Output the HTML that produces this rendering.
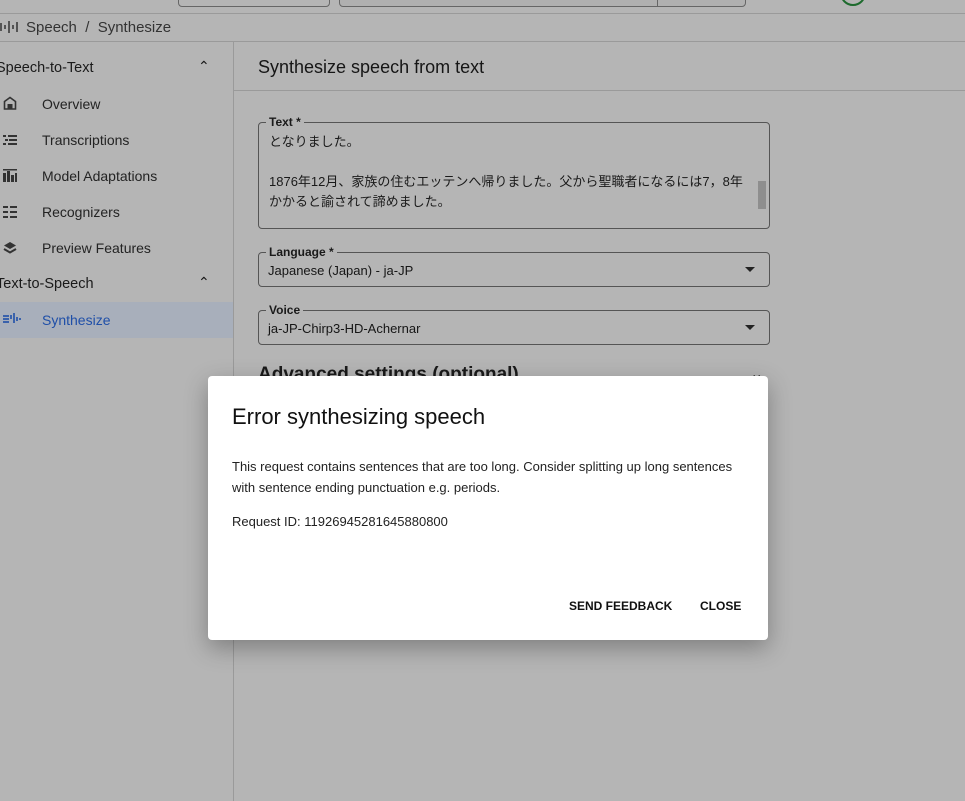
<!DOCTYPE html>
<html><head><meta charset="utf-8"><style>
*{margin:0;padding:0;box-sizing:border-box}
body{width:965px;height:801px;background:#b5b5b5;font-family:"Liberation Sans","Noto Sans CJK JP",sans-serif;color:#161616;position:relative;overflow:hidden}
.a{position:absolute}
.t{font-size:14px;white-space:nowrap}
.box{border:1px solid #555;border-radius:4px}
.lbl{position:absolute;top:-8px;left:7px;background:#b5b5b5;padding:0 3px;font-size:12px;font-weight:bold;color:#1a1a1a}
.nav{position:absolute;left:42px;font-size:14px;color:#232323}
.ic{position:absolute;left:3px;width:14px;height:14px}
</style></head><body>
<div class="a" style="left:178px;top:-10px;width:152px;height:17px;border:1px solid #666;border-radius:4px"></div>
<div class="a" style="left:339px;top:-10px;width:407px;height:17px;border:1px solid #666;border-radius:4px;background:#b0b0b0"></div>
<div class="a" style="left:657px;top:-10px;width:1px;height:16px;background:#666"></div>
<div class="a" style="left:840px;top:-20px;width:26px;height:26px;border:2px solid #1e6b2e;border-radius:50%"></div>
<div class="a" style="left:0;top:13px;width:965px;height:1px;background:#9a9a9a"></div>
<svg class="a" style="left:0;top:19px" width="20" height="16"><g stroke="#333" stroke-width="1.5"><line x1="1" y1="4" x2="1" y2="12"/><line x1="5" y1="6" x2="5" y2="10"/><line x1="9" y1="2" x2="9" y2="14"/><line x1="13" y1="6" x2="13" y2="10"/><line x1="17" y1="3" x2="17" y2="13"/></g></svg>
<div class="a t" style="left:26px;top:19px;font-size:15px;color:#333">Speech &nbsp;/&nbsp; Synthesize</div>
<div class="a" style="left:0;top:41px;width:965px;height:1px;background:#9a9a9a"></div>
<div class="a" style="left:233px;top:42px;width:1px;height:759px;background:#9a9a9a"></div>
<div class="a t" style="left:-4px;top:60px;font-size:14.5px;color:#1a1a1a">Speech-to-Text</div>
<div class="a t" style="left:198px;top:58px;font-size:14px">&#8963;</div>
<svg class="ic" style="top:96px" viewBox="0 0 14 14"><path d="M1.5 13V5.5L7 1.5l5.5 4V13z" fill="none" stroke="#333" stroke-width="1.6"/><rect x="4.5" y="8" width="5" height="5" fill="#333"/></svg>
<div class="nav" style="top:96px">Overview</div>
<svg class="ic" style="top:133px" viewBox="0 0 14 14"><g fill="#333"><rect x="0" y="2" width="3" height="2"/><rect x="5" y="2" width="9" height="2"/><rect x="2" y="6" width="3" height="2"/><rect x="6" y="6" width="8" height="2"/><rect x="0" y="10" width="3" height="2"/><rect x="5" y="10" width="9" height="2"/></g></svg>
<div class="nav" style="top:132px">Transcriptions</div>
<svg class="ic" style="top:168px" viewBox="0 0 14 14"><g fill="#333"><rect x="0" y="5" width="3" height="9"/><rect x="4" y="3" width="3" height="11"/><rect x="8" y="7" width="3" height="7"/><rect x="12" y="5" width="2" height="9"/><rect x="0" y="1" width="14" height="1.5"/></g></svg>
<div class="nav" style="top:168px">Model Adaptations</div>
<svg class="ic" style="top:205px" viewBox="0 0 14 14"><g fill="#333"><rect x="0" y="1" width="5" height="2"/><rect x="7" y="1" width="7" height="2"/><rect x="0" y="6" width="5" height="2"/><rect x="7" y="6" width="7" height="2"/><rect x="0" y="11" width="5" height="2"/><rect x="7" y="11" width="7" height="2"/></g></svg>
<div class="nav" style="top:204px">Recognizers</div>
<svg class="ic" style="top:241px" viewBox="0 0 14 14"><path d="M7 1l6 3.5-6 3.5-6-3.5z" fill="#333"/><path d="M1 8l6 3.5 6-3.5" fill="none" stroke="#333" stroke-width="2"/></svg>
<div class="nav" style="top:240px">Preview Features</div>
<div class="a t" style="left:-4px;top:276px;font-size:14.5px;color:#1a1a1a">Text-to-Speech</div>
<div class="a t" style="left:198px;top:274px;font-size:14px">&#8963;</div>
<div class="a" style="left:0;top:302px;width:233px;height:36px;background:#a8afbb"></div>
<svg class="ic" style="top:312px;width:18px" viewBox="0 0 18 14"><g stroke="#1f4fa8" stroke-width="1.6" fill="none"><line x1="0" y1="4" x2="6" y2="4"/><line x1="0" y1="7" x2="6" y2="7"/><line x1="0" y1="10" x2="6" y2="10"/><path d="M8 7V3M11 11V1M14 9V5M17 8V6"/></g></svg>
<div class="nav" style="top:312px;color:#1f4fa8">Synthesize</div>
<div class="a t" style="left:258px;top:57px;font-size:18px;color:#161616">Synthesize speech from text</div>
<div class="a" style="left:234px;top:90px;width:731px;height:1px;background:#9a9a9a"></div>
<div class="a box" style="left:258px;top:122px;width:512px;height:107px">
<div class="lbl">Text *</div>
<div class="a" style="left:10px;top:9px;font-size:13px;line-height:20px;color:#1a1a1a">となりました。<br><br>1876年12月、家族の住むエッテンへ帰りました。父から聖職者になるには7，8年<br>かかると諭されて諦めました。</div>
<div class="a" style="left:499px;top:58px;width:8px;height:28px;background:#8e8e8e"></div>
</div>
<div class="a box" style="left:258px;top:252px;width:512px;height:35px"><div class="lbl">Language *</div>
<div class="a t" style="left:9px;top:10px;font-size:13px">Japanese (Japan) - ja-JP</div>
<div class="a" style="left:486px;top:14px;border-left:5px solid transparent;border-right:5px solid transparent;border-top:5px solid #222"></div></div>
<div class="a box" style="left:258px;top:310px;width:512px;height:35px"><div class="lbl">Voice</div>
<div class="a t" style="left:9px;top:10px;font-size:13px">ja-JP-Chirp3-HD-Achernar</div>
<div class="a" style="left:486px;top:14px;border-left:5px solid transparent;border-right:5px solid transparent;border-top:5px solid #222"></div></div>
<div class="a t" style="left:258px;top:364px;font-size:19px;font-weight:bold;color:#1a1a1a">Advanced settings (optional)</div>
<div class="a t" style="left:750px;top:364px;font-size:16px">&#8964;</div>
<div class="a" style="left:208px;top:376px;width:560px;height:264px;background:#fff;border-radius:4px;box-shadow:0 8px 24px rgba(0,0,0,.3)">
<div class="a t" style="left:24px;top:28px;font-size:22px;color:#111">Error synthesizing speech</div>
<div class="a" style="left:24px;top:80px;width:520px;font-size:13px;line-height:21px;color:#222">This request contains sentences that are too long. Consider splitting up long sentences with sentence ending punctuation e.g. periods.</div>
<div class="a t" style="left:24px;top:138px;font-size:13px;color:#222">Request ID: 11926945281645880800</div>
<div class="a t" style="left:361px;top:223px;font-size:12px;font-weight:bold;color:#111">SEND FEEDBACK</div>
<div class="a t" style="left:492px;top:223px;font-size:12px;font-weight:bold;color:#111">CLOSE</div>
</div>
</body></html>
